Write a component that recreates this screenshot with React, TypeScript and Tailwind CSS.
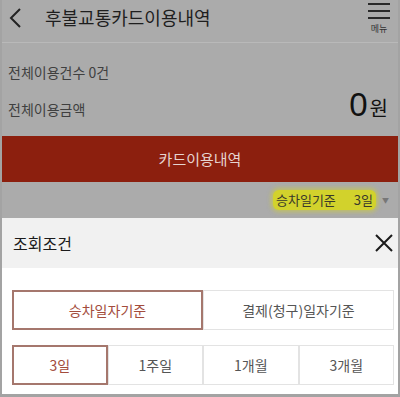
import React from "react";

const font = { fontFamily: '"Noto Sans CJK KR", "Noto Sans", sans-serif' };

function MenuIcon() {
  return (
    <div className="flex w-[26px] flex-col items-center pt-[3px]">
      <div className="flex w-[22px] flex-col gap-[5px]">
        <span className="h-[2px] w-full bg-[#2a2a2a]" />
        <span className="h-[2px] w-full bg-[#2a2a2a]" />
        <span className="h-[2px] w-full bg-[#2a2a2a]" />
      </div>
      <span className="mt-[5px] text-[9px] leading-none text-[#333]">메뉴</span>
    </div>
  );
}

const periods = ["3일", "1주일", "1개월", "3개월"];

export default function App() {
  const [basis, setBasis] = React.useState(0);
  const [period, setPeriod] = React.useState(0);

  return (
    <div
      style={font}
      className="flex h-[397px] w-[400px] flex-col overflow-hidden border-x-2 border-b-[3px] border-[#a3a3a3] bg-[#ababab]"
    >
      {/* header */}
      <div className="flex h-[43px] shrink-0 items-start justify-between border-b border-[#b9b9b9] pl-[6px] pr-[6px]">
        <div className="flex items-center">
          <svg width="16" height="22" viewBox="0 0 16 22" className="mt-[6px]">
            <path d="M12 2 L3 11 L12 20" fill="none" stroke="#222" strokeWidth="2" />
          </svg>
          <h1 className="ml-[21px] mt-[4px] text-[18px] leading-[26px] text-[#1e1e1e]">후불교통카드이용내역</h1>
        </div>
        <MenuIcon />
      </div>

      {/* totals */}
      <div className="flex h-[93px] shrink-0 flex-col px-[6px] pt-[19px]">
        <p className="text-[14px] leading-[20px] text-[#3f3f3f]">전체이용건수 0건</p>
        <div className="mt-[6px] flex items-end justify-between">
          <p className="mb-[3px] text-[14px] leading-[20px] text-[#3f3f3f]">전체이용금액</p>
          <p className="flex items-end pr-[4px] text-[#111]">
            <span className="text-[33px] leading-[34px]" style={{ fontFamily: '"Liberation Sans", Arial, sans-serif' }}>0</span>
            <span className="mb-[2px] ml-[2px] text-[20px] leading-[24px]">원</span>
          </p>
        </div>
      </div>

      {/* red bar */}
      <div className="flex h-[46px] shrink-0 items-center justify-center bg-[#8c1f0e]">
        <span className="text-[15px] text-[#e6d4d0]">카드이용내역</span>
      </div>

      {/* filter row */}
      <div className="flex h-[36px] shrink-0 items-center justify-end pr-[9px]">
        <div className="flex items-center rounded-[6px] bg-[#d2d22c] px-[3px] py-[1px] shadow-[0_0_4px_2px_rgba(210,210,44,0.55)]">
          <span className="text-[13px] leading-[18px] text-[#3a3a2a]">승차일기준</span>
          <span className="ml-[18px] text-[13px] leading-[18px] text-[#3a3a2a]">3일</span>
        </div>
        <span className="ml-[6px] text-[7px] text-[#777]">▼</span>
      </div>

      {/* sheet */}
      <div className="flex flex-1 flex-col bg-white">
        <div className="flex h-[50px] shrink-0 items-center justify-between bg-[#f1f1f1] pl-[11px] pr-[5px]">
          <span className="text-[16px] text-[#1b1b1b]">조회조건</span>
          <svg width="18" height="18" viewBox="0 0 18 18">
            <path d="M1 1 L17 17 M17 1 L1 17" stroke="#1b1b1b" strokeWidth="2" />
          </svg>
        </div>

        <div className="flex flex-col gap-[15px] pl-[10px] pr-[4px] pt-[22px]">
          <div className="grid h-[40px] grid-cols-2">
            {["승차일자기준", "결제(청구)일자기준"].map((label, i) => (
              <button
                key={label}
                onClick={() => setBasis(i)}
                className={
                  basis === i
                    ? "border-2 border-[#a5776d] text-[14px] text-[#a34c3c]"
                    : "border border-[#e3e3e3] text-[14px] text-[#555]"
                }
              >
                {label}
              </button>
            ))}
          </div>
          <div className="grid h-[40px] grid-cols-4">
            {periods.map((label, i) => (
              <button
                key={label}
                onClick={() => setPeriod(i)}
                className={
                  period === i
                    ? "border-2 border-[#a5776d] text-[14px] text-[#a34c3c]"
                    : "border border-[#e3e3e3] text-[14px] text-[#555]"
                }
              >
                {label}
              </button>
            ))}
          </div>
        </div>
      </div>
    </div>
  );
}
